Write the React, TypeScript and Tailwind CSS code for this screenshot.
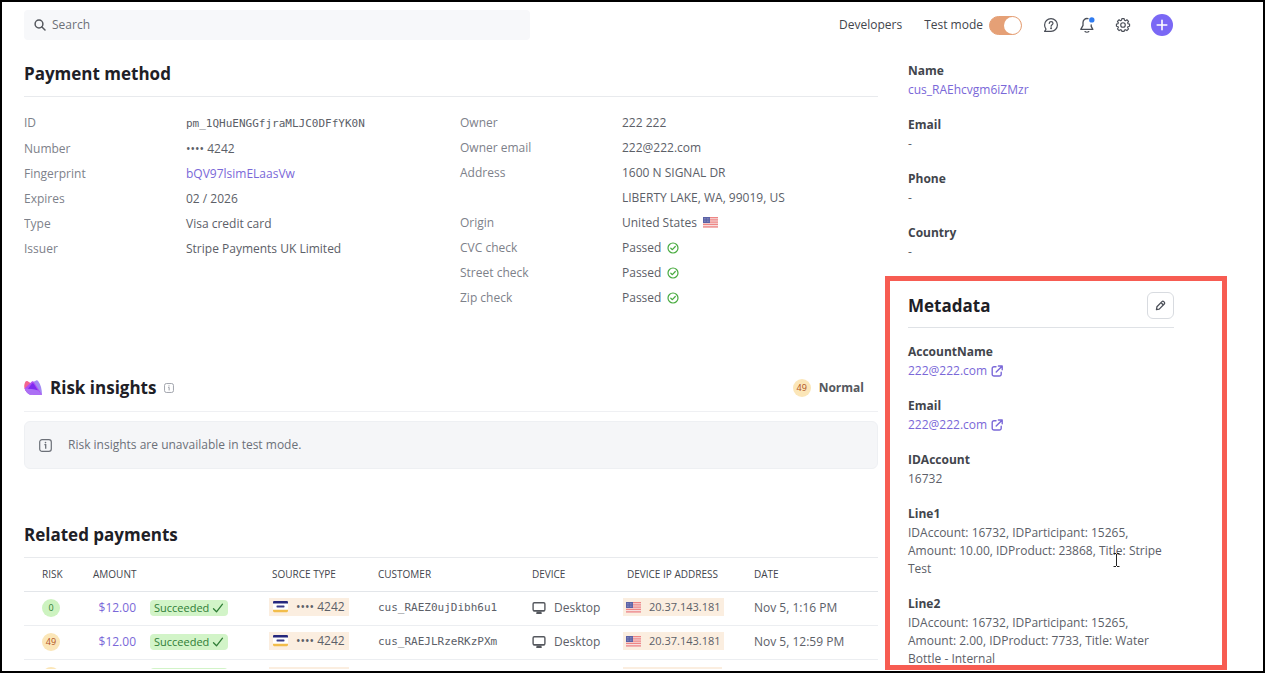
import type { ReactNode } from "react";

interface Payment {
    risk: number;
    customer: string;
    date: string;
}

const payments: Payment[] = [
    { risk: 0, customer: "cus_RAEZ0ujDibh6u1", date: "Nov 5, 1:16 PM" },
    { risk: 49, customer: "cus_RAEJLRzeRKzPXm", date: "Nov 5, 12:59 PM" },
];

const SearchIcon = () => (
    <svg className="w-3 h-3 shrink-0" viewBox="0 0 12 12" fill="none" stroke="#55585e" strokeWidth="1.5" strokeLinecap="round" aria-hidden="true">
        <circle cx="5" cy="5" r="3.9" />
        <path d="M8 8l3 3" />
    </svg>
);

const HelpIcon = () => (
    <svg className="w-4 h-4" viewBox="0 0 16 16" fill="none" stroke="#4a4e57" strokeWidth="1.2" strokeLinecap="round" strokeLinejoin="round" aria-hidden="true">
        <path d="M1.6 14.4h6.4a6.4 6.4 0 1 0-6.4-6.4c0 1.7.5 3 1.4 4.2z" />
        <path d="M6.2 6.4c.1-1.2.9-1.8 1.9-1.8s1.9.7 1.9 1.7c0 1.5-1.9 1.5-1.9 3" />
        <circle cx="8.1" cy="11.2" r=".4" fill="#4a4e57" />
    </svg>
);

const BellIcon = () => (
    <svg className="w-4 h-4" viewBox="0 0 16 16" fill="none" stroke="#4a4e57" strokeWidth="1.3" strokeLinecap="round" strokeLinejoin="round" aria-hidden="true">
        <path d="M9 1.6C6 1 4 3 4 5.600v2.800L1.800 12.400h12L12.200 9.400V7.800" />
        <path d="M6 14.6c.9.8 2.9.8 3.8 0" />
        <circle cx="12.8" cy="2.9" r="2.7" fill="#2f7bf0" stroke="none" />
    </svg>
);

const GearIcon = () => (
    <svg className="w-4 h-4" viewBox="-1 -1 26 28" fill="none" stroke="#4a4e57" strokeWidth="2" strokeLinejoin="round" aria-hidden="true">
        <path d="M10 1.8h4l.6 2.9 1.7.7 2.5-1.6 2.9 2.9-1.6 2.5.7 1.7 2.7.6v3.6l-2.7.6-.7 1.7 1.6 2.5-2.9 2.9-2.5-1.6-1.7.7-.6 2.3h-4l-.6-2.3-1.7-.7-2.5 1.6-2.9-2.9 1.6-2.5-.7-1.7-2.7-.6v-3.6l2.7-.6.7-1.7-1.6-2.5 2.9-2.9 2.5 1.6 1.7-.7z" />
        <circle cx="12" cy="13" r="4" />
    </svg>
);

const PlusIcon = () => (
    <svg className="w-3 h-3" viewBox="0 0 12 12" stroke="#fff" strokeWidth="1.6" strokeLinecap="round" aria-hidden="true">
        <path d="M6 1.2v9.6M1.2 6h9.6" />
    </svg>
);

const InfoIcon = ({ className }: { className: string }) => (
    <svg className={className} viewBox="0 0 13 13" fill="none" stroke="currentColor" aria-hidden="true">
        <rect x=".7" y=".7" width="11.6" height="11.6" rx="2.4" strokeWidth="1.2" />
        <path d="M5.4 5.7h1.3v4" strokeWidth="1.3" />
        <circle cx="6.5" cy="3.6" r=".8" fill="currentColor" stroke="none" />
    </svg>
);

const CheckCircleIcon = () => (
    <svg className="w-3 h-3" viewBox="0 0 12 12" fill="none" stroke="#48ab3f" strokeWidth="1.2" strokeLinecap="round" strokeLinejoin="round" aria-hidden="true">
        <circle cx="6" cy="6" r="5" />
        <path d="M3.8 6.2l1.6 1.5 2.9-3.2" />
    </svg>
);

const CheckIcon = () => (
    <svg className="w-3 h-3" viewBox="0 0 12 12" fill="none" stroke="#2f7d36" strokeWidth="1.3" strokeLinecap="round" strokeLinejoin="round" aria-hidden="true">
        <path d="M1.5 6.8l3 3 6-7.6" />
    </svg>
);

const ExternalIcon = () => (
    <svg className="w-3 h-3" viewBox="0 0 12 12" fill="none" stroke="#7a68d8" strokeWidth="1.4" strokeLinecap="round" strokeLinejoin="round" aria-hidden="true">
        <path d="M5 1.8H3A1.8 1.8 0 0 0 1.2 3.6v5.6A1.8 1.8 0 0 0 3 11h5.4a1.8 1.8 0 0 0 1.8-1.8V7.2" />
        <path d="M7.4 1h3.8v3.8M11 1.2L5.2 7" />
    </svg>
);

const PencilIcon = () => (
    <svg className="w-[11px] h-[11px]" viewBox="0 0 12 12" fill="none" stroke="#4a4e57" strokeWidth="1.4" strokeLinejoin="round" aria-hidden="true">
        <path d="M1.6 10.4l.5-3 5.5-5.6c.6-.6 1.4-.6 2 0l.5.5c.6.6.6 1.4 0 2L4.6 9.9z" />
        <path d="M6.9 3.2l2 2" />
    </svg>
);

const DesktopIcon = () => (
    <svg className="w-[14px] h-[14px]" viewBox="0 0 14 14" aria-hidden="true">
        <rect x="1.1" y="1.7" width="11.8" height="8" rx="1.2" fill="none" stroke="#55585e" strokeWidth="1.4" />
        <path d="M1 9h12v.6c0 .6-.4 1-1 1H2c-.6 0-1-.4-1-1z" fill="#55585e" />
        <path d="M4.6 10.5h4.8l.4 2.4H4.2z" fill="#55585e" />
    </svg>
);

const FlagIcon = () => (
    <svg className="w-[15px] h-[11px]" viewBox="0 0 15 11" role="img" aria-label="US flag">
        <rect width="15" height="11" fill="#f6dfe0" />
        <path d="M0 .7h15M0 2.9h15M0 5.1h15M0 7.3h15M0 9.9h15" stroke="#ee8684" strokeWidth="1.2" />
        <rect width="7" height="6" fill="#5b62a6" />
        <path d="M1 1.5h5.5M1 3h5.5M1 4.5h5.5" stroke="#a9add3" strokeWidth=".6" strokeDasharray=".7 .8" />
    </svg>
);

const CardIcon = () => (
    <svg className="w-[15px] h-[13px]" viewBox="0 0 15 13" aria-hidden="true">
        <rect y="1" width="15" height="11" rx="1" fill="#fff" />
        <path d="M0 3.600V2.200C0 1.500.6 1 1.200 1h12.600c.6 0 1.200.5 1.200 1.200v1.400z" fill="#25277c" />
        <rect x="3.5" y="5.6" width="8" height="1.8" rx=".6" fill="#3a3d88" />
        <path d="M0 9.800h15v1.300c0 .7-.6 1.200-1.200 1.200H1.200C.6 12.300 0 11.800 0 11.100z" fill="#f2bd4b" />
    </svg>
);

const RadarLogo = () => (
    <svg className="w-[18px] h-[15px]" viewBox="0 0 18 15" aria-hidden="true">
        <path d="M.2 6C.4 3.600 1 2.400 1.600 1.500 2 .9 2.700.8 3.300 1.100L8 4 4 13C1.800 11.400 0 9 .2 6z" fill="#f3668f" />
        <path d="M8 2.400l4.200-2C12.900.1 13.600.3 14.100.9 16.600 4.200 18 9 18 14.800H9z" fill="#a38bf3" />
        <path d="M.6 8.600L7.600 1.800c.6-.6 1.500-.6 2 0L15 10l3 4.800H6C3.400 13.600 1.600 11.600.6 8.600z" fill="#b04ff2" />
        <path d="M3.600 9.200L8 3.600c.5-.6 1.300-.5 1.700.1L14 10.400z" fill="#7d2bf0" />
        <path d="M.6 8.600c4 .2 9.400.6 13.400 1.800l4 4.400H6C3.400 13.600 1.600 11.600.6 8.600z" fill="#ab70f4" />
    </svg>
);

const RiskBadge = ({ score }: { score: number }) => (
    <span
        className={
            score > 10
                ? "flex w-[18px] h-[18px] items-center justify-center rounded-full bg-[#fbe6b8] text-[9px] font-normal text-[#b0521f]"
                : "flex w-[18px] h-[18px] items-center justify-center rounded-full bg-[#cdf3c0] text-[9px] font-normal text-[#2f7d36]"
        }
    >
        {score}
    </span>
);

const Passed = () => (
    <span className="flex items-center gap-[6px]">
        Passed <CheckCircleIcon />
    </span>
);

const Detail = ({ label, children }: { label: string; children: ReactNode }) => (
    <div className="flex leading-[25px]">
        <dt className="w-[162px] shrink-0 text-[#7d818a]">{label}</dt>
        <dd>{children}</dd>
    </div>
);

const Field = ({ label, children }: { label: string; children: ReactNode }) => (
    <div className="mb-4 leading-[18px]">
        <dt className="leading-5 font-bold text-[#42454c]">{label}</dt>
        <dd>{children}</dd>
    </div>
);

const MailLink = () => (
    <a href="#" className="inline-flex items-center gap-1 font-medium text-[#7a68d8]">
        222@222.com <ExternalIcon />
    </a>
);

// Text caret pointer resting over the metadata list
const TextCursor = () => (
    <svg className="absolute left-[205px] top-[49px] w-[7px] h-[14px]" viewBox="0 0 7 14" fill="none" stroke="#222" aria-hidden="true">
        <path d="M.5 .5h2.500M4 .5h2.500M3.500 1v12M.5 13.500h2.500M4 13.500h2.500" />
    </svg>
);

export default function App() {
    return (
        <div className="flex flex-col h-screen overflow-hidden border-2 border-black bg-white font-['Open_Sans','Noto_Sans',sans-serif] text-[12px] text-[#5c6068]">
            <header className="flex shrink-0 h-[46px] items-center justify-between pl-[22px] pr-[90px]">
                <label className="flex flex-1 max-w-[506px] h-[30px] items-center gap-[6px] rounded bg-[#f7f8fa] pl-[10px]">
                    <SearchIcon />
                    <input type="search" aria-label="Search" placeholder="Search" className="w-full bg-transparent outline-none placeholder:text-[#6c7078]" />
                </label>
                <nav className="flex items-center text-[#42454c]">
                    <a href="#">Developers</a>
                    <label className="flex items-center gap-[6px] ml-[22px]">
                        Test mode
                        <input type="checkbox" defaultChecked className="peer sr-only" />
                        <span className="flex w-[33px] h-[19px] justify-end rounded-full border border-[#e5a076] bg-[#e5a076]">
                            <span className="w-[17px] h-[17px] rounded-full bg-white" />
                        </span>
                    </label>
                    <div className="flex items-center gap-5 ml-[21px]">
                        <button type="button" aria-label="Help"><HelpIcon /></button>
                        <button type="button" aria-label="Notifications"><BellIcon /></button>
                        <button type="button" aria-label="Settings"><GearIcon /></button>
                        <button type="button" aria-label="Create" className="flex w-[22px] h-[22px] items-center justify-center rounded-full bg-[#7a68f5]">
                            <PlusIcon />
                        </button>
                    </div>
                </nav>
            </header>

            <div className="flex flex-1 min-h-0 gap-[7px] pl-[22px] pr-9">
                <main className="flex-1 min-w-0 overflow-hidden mb-[2px]">
                    <section className="h-[314px]">
                        <h2 className="h-[49px] border-b border-[#e8eaed] pt-3 text-[17px] leading-7 font-bold text-[#1e2026]">Payment method</h2>
                        <div className="grid grid-cols-[436px_1fr] pt-[13px]">
                            <dl>
                                <Detail label="ID">
                                    <span className="font-['DejaVu_Sans_Mono',monospace] text-[11px]">pm_1QHuENGGfjraMLJC0DFfYK0N</span>
                                </Detail>
                                <Detail label="Number">•••• 4242</Detail>
                                <Detail label="Fingerprint">
                                    <a href="#" className="font-medium text-[#7a68d8]">bQV97lsimELaasVw</a>
                                </Detail>
                                <Detail label="Expires">02 / 2026</Detail>
                                <Detail label="Type">Visa credit card</Detail>
                                <Detail label="Issuer">Stripe Payments UK Limited</Detail>
                            </dl>
                            <dl>
                                <Detail label="Owner">222 222</Detail>
                                <Detail label="Owner email">222@222.com</Detail>
                                <Detail label="Address">
                                    1600 N SIGNAL DR
                                    <br />
                                    LIBERTY LAKE, WA, 99019, US
                                </Detail>
                                <Detail label="Origin">
                                    <span className="flex items-center gap-[6px]">
                                        United States <FlagIcon />
                                    </span>
                                </Detail>
                                <Detail label="CVC check"><Passed /></Detail>
                                <Detail label="Street check"><Passed /></Detail>
                                <Detail label="Zip check"><Passed /></Detail>
                            </dl>
                        </div>
                    </section>

                    <section className="h-[147px]">
                        <div className="flex h-[50px] items-center border-b border-[#eff0f3] pt-[2px] pr-[14px]">
                            <RadarLogo />
                            <h2 className="mx-2 text-[17px] font-bold text-[#1e2026]">Risk insights</h2>
                            <InfoIcon className="w-[10px] h-[10px] text-[#9a9da6]" />
                            <div className="flex items-center gap-2 ml-auto font-bold text-[#55585e]">
                                <RiskBadge score={49} />
                                Normal
                            </div>
                        </div>
                        <div className="flex items-center gap-4 h-12 mt-[9px] rounded-md border border-[#eef0f3] bg-[#f5f6f8] pl-[14px] text-[#6c7078]">
                            <InfoIcon className="w-[13px] h-[13px]" />
                            Risk insights are unavailable in test mode.
                        </div>
                    </section>

                    <section>
                        <h2 className="h-[49px] border-b border-[#e8eaed] pt-3 text-[17px] leading-7 font-bold text-[#1e2026]">Related payments</h2>
                        <table className="w-full table-fixed text-left whitespace-nowrap">
                            <colgroup>
                                <col className="w-[69px]" />
                                <col className="w-[57px]" />
                                <col className="w-[119px]" />
                                <col className="w-[109px]" />
                                <col className="w-[154px]" />
                                <col className="w-[91px]" />
                                <col className="w-[131px]" />
                                <col />
                            </colgroup>
                            <thead>
                                <tr className="h-[33px] border-b border-[#e3e6ea] text-[10px] text-[#42454c]">
                                    <th className="pl-[18px] font-normal">RISK</th>
                                    <th colSpan={2} className="font-normal">AMOUNT</th>
                                    <th className="pl-[3px] font-normal">SOURCE TYPE</th>
                                    <th className="font-normal">CUSTOMER</th>
                                    <th className="font-normal">DEVICE</th>
                                    <th className="pl-1 font-normal">DEVICE IP ADDRESS</th>
                                    <th className="font-normal">DATE</th>
                                </tr>
                            </thead>
                            <tbody>
                                {payments.map((payment) => (
                                    <tr key={payment.customer} className="h-[34px] border-b border-[#eceef1]">
                                        <td className="pl-[18px]"><RiskBadge score={payment.risk} /></td>
                                        <td className="pr-[14px] text-right"><a href="#" className="font-medium text-[#7a68d8]">$12.00</a></td>
                                        <td>
                                            <span className="inline-flex h-4 items-center gap-[3px] rounded bg-[#d2f4c8] px-1 text-[11px] font-medium text-[#2f7d36]">
                                                Succeeded <CheckIcon />
                                            </span>
                                        </td>
                                        <td>
                                            <span className="inline-flex h-[18px] items-center gap-2 bg-[#fbeee0] px-1">
                                                <CardIcon /> •••• 4242
                                            </span>
                                        </td>
                                        <td className="font-['DejaVu_Sans_Mono',monospace] text-[11px]">{payment.customer}</td>
                                        <td>
                                            <span className="flex items-center gap-2"><DesktopIcon /> Desktop</span>
                                        </td>
                                        <td>
                                            <span className="inline-flex h-[18px] items-center gap-2 bg-[#fbeee0] px-[3px] text-[11px]">
                                                <FlagIcon /> 20.37.143.181
                                            </span>
                                        </td>
                                        <td>{payment.date}</td>
                                    </tr>
                                ))}
                                {/* Placeholder for the next payment below the fold */}
                                <tr aria-hidden="true" className="h-[34px]">
                                    <td className="pl-[18px]"><span className="block w-[18px] h-[18px] rounded-full bg-[#fbe6b8]" /></td>
                                    <td />
                                    <td><span className="block w-[78px] h-4 rounded bg-[#d2f4c8]" /></td>
                                    <td><span className="block w-20 h-[18px] bg-[#fbeee0]" /></td>
                                    <td />
                                    <td />
                                    <td><span className="block w-[99px] h-[18px] bg-[#fbeee0]" /></td>
                                    <td />
                                </tr>
                            </tbody>
                        </table>
                    </section>
                </main>

                <aside className="flex flex-col w-[342px] shrink-0">
                    <dl className="h-[228px] shrink-0 pt-[13px] pl-[23px]">
                        <Field label="Name">
                            <a href="#" className="font-medium text-[#7a68d8]">cus_RAEhcvgm6iZMzr</a>
                        </Field>
                        <Field label="Email">-</Field>
                        <Field label="Phone">-</Field>
                        <Field label="Country">-</Field>
                    </dl>
                    <section className="flex-1 min-h-0 overflow-hidden mb-px border-[5px] border-[#f75c52] pl-[18px] pr-12">
                        <div className="flex h-[47px] items-center justify-between border-b border-[#dfe2e6] pt-[3px]">
                            <h2 className="text-[17px] font-bold text-[#1e2026]">Metadata</h2>
                            <button type="button" aria-label="Edit metadata" className="flex w-[27px] h-[27px] items-center justify-center rounded-md border border-[#d8dbe0]">
                                <PencilIcon />
                            </button>
                        </div>
                        <dl className="pt-[14px]">
                            <Field label="AccountName"><MailLink /></Field>
                            <Field label="Email"><MailLink /></Field>
                            <Field label="IDAccount">16732</Field>
                            <div className="relative">
                                <Field label="Line1">
                                    IDAccount: 16732, IDParticipant: 15265, Amount: 10.00, IDProduct: 23868, Title: Stripe Test
                                </Field>
                                <TextCursor />
                            </div>
                            <Field label="Line2">
                                IDAccount: 16732, IDParticipant: 15265, Amount: 2.00, IDProduct: 7733, Title: Water Bottle - Internal
                            </Field>
                        </dl>
                    </section>
                </aside>
            </div>
        </div>
    );
}
